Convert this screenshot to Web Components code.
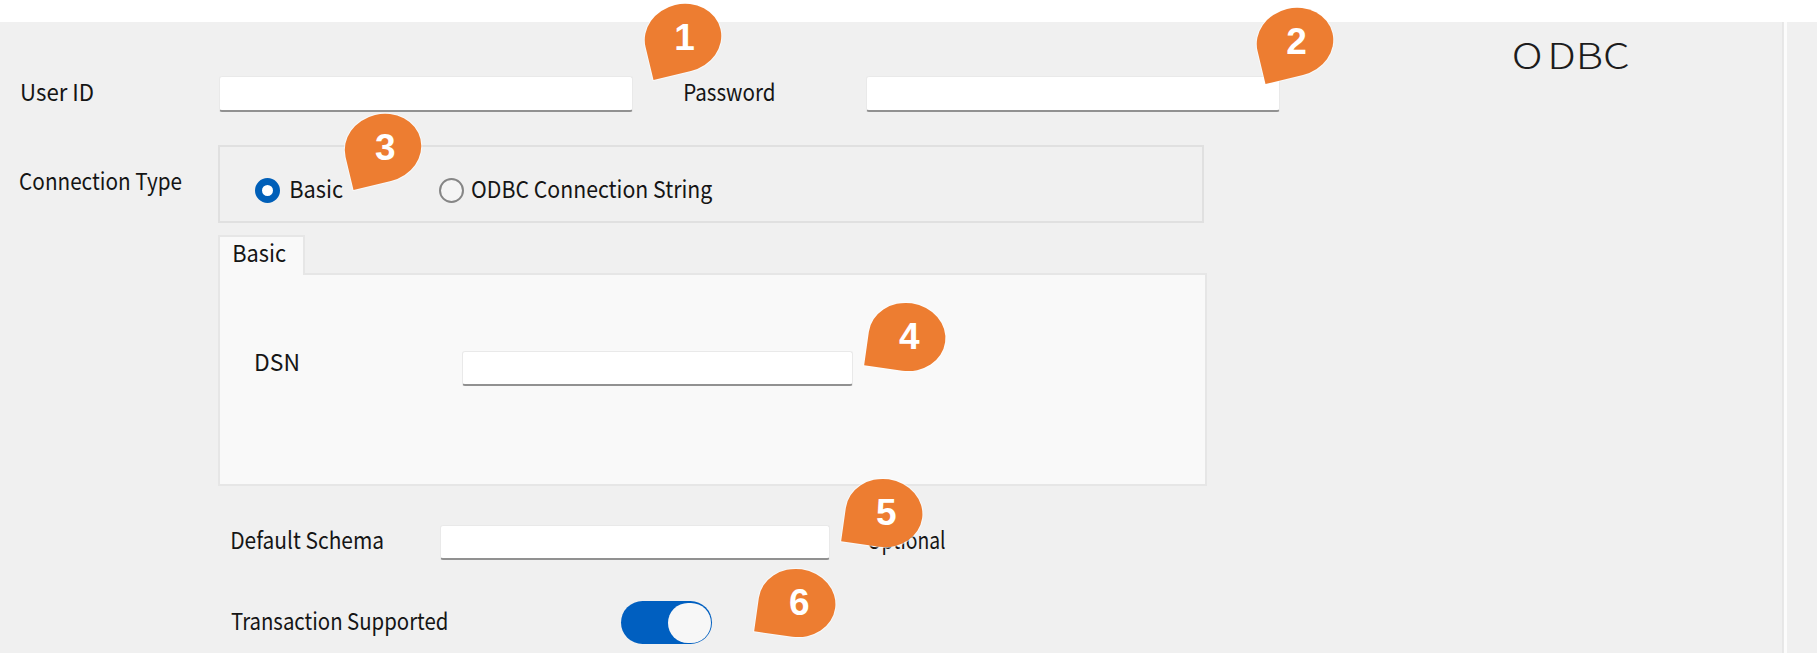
<!DOCTYPE html>
<html lang="en"><head><meta charset="utf-8"><title>ODBC connection</title>
<style>html,body{margin:0;background:#fff;overflow:hidden}</style></head>
<body><odbc-page></odbc-page>
<script>
const define = (name, html, init) => {
  const t = document.createElement('template');
  t.innerHTML = html;
  customElements.define(name, class extends HTMLElement {
    connectedCallback() {
      if (this.shadowRoot) return;
      this.attachShadow({mode: 'open'}).append(t.content.cloneNode(true));
      if (init) init(this, this.shadowRoot);
    }
  });
};

// A label whose ink spans exactly its "w" attribute; "gap" is extra letter-spacing inside it.
define('ui-text', `<style>
  :host{display:block;flex:none;height:30px;line-height:30px;font-size:23.5px;color:#151515;white-space:pre}
  span{display:inline-block;transform-origin:0 0}
</style><span><slot></slot></span>`, (host, root) => {
  const w = +host.getAttribute('w'), gap = +(host.getAttribute('gap') || 0), s = root.querySelector('span');
  const cs = getComputedStyle(host), c = document.createElement('canvas').getContext('2d');
  c.font = cs.fontWeight + ' ' + cs.fontSize + ' ' + cs.fontFamily;
  const m = c.measureText(host.textContent);
  const k = w / (m.actualBoundingBoxRight + m.actualBoundingBoxLeft + gap);
  host.style.width = w + 'px';
  s.style.transform = 'translateX(' + m.actualBoundingBoxLeft * k + 'px) scaleX(' + k + ')';
});

define('ui-field', `<style>
  :host{display:block;flex:none;box-sizing:border-box;height:35px;background:#fff;border:1px solid #e9e9e9;border-bottom:2px solid #919191;border-radius:3px}
</style>`);

define('ui-radio', `<style>
  :host{display:flex;align-items:flex-start}
  i{flex:none;box-sizing:border-box;width:25px;height:25px;border-radius:50%;border:2px solid #868686;background:#f5f5f5}
  :host([checked]) i{border:7.5px solid #005fb8;background:#fff}
  ::slotted(*){margin-top:-5px}
</style><i></i><slot></slot>`);

define('ui-toggle', `<style>
  :host{display:flex;flex:none;justify-content:flex-end;box-sizing:border-box;width:91px;height:43px;border-radius:22px;background:#005fc0;padding:1.5px}
  i{width:43px;height:40px;border-radius:21px;background:#f7f7f7}
</style><i></i>`);

define('ui-group', `<style>
  :host{display:flex;flex:none;box-sizing:border-box;width:986px;height:78px;border:2px solid #e0e0e0}
</style><slot></slot>`);

define('ui-tabs', `<style>
  :host{display:block;width:989px}
  .tab{position:relative;z-index:1;box-sizing:border-box;width:87px;height:40px;margin-bottom:-2px;padding:0 0 0 14px;background:#f9f9f9;border:2px solid #e6e6e6;border-bottom:0}
  .pane{box-sizing:border-box;height:213px;background:#f9f9f9;border:2px solid #e6e6e6;display:flex;padding:77px 0 0 36px}
</style><div class="tab"><slot name="tab"></slot></div><div class="pane"><slot></slot></div>`);

// Numbered teardrop placed over the form; x and y give its centre.
define('ui-pin', `<style>
  :host{position:absolute;width:77px;height:68px;transform:translate(-50%,-50%)}
  i{position:absolute;inset:0;border-radius:50% 50% 50% 0;background:#ed7d31;box-shadow:0 0 0 1px rgba(255,255,255,.6);transform:rotate(var(--r))}
  b{position:relative;display:block;text-align:center;font:bold 37px/68px "Liberation Sans",Arial,sans-serif;color:#fff;left:2px}
</style><i></i><b><slot></slot></b>`, h => {
  h.style.left = h.getAttribute('x') + 'px';
  h.style.top = h.getAttribute('y') + 'px';
  h.style.setProperty('--r', h.getAttribute('r') + 'deg');
});

define('odbc-page', `<style>
  :host{display:block;position:relative;width:1817px;height:653px;overflow:hidden;box-sizing:border-box;padding-top:22px;font-family:"Noto Sans CJK JP",sans-serif}
  .main{display:flex;height:631px;background:#f0f0f0}
  .form{width:1783px;box-sizing:border-box;border-right:1px solid #e6e6e6}
  .rule{width:3px;background:#fcfcfc;border-left:1px solid #e8e8e8}
  .row{display:flex;align-items:flex-start}
  .title{font-size:36px;line-height:50px;height:50px;font-weight:300;color:#1c1c1c}
  .title span{letter-spacing:4px}
</style>
<div class="main"><div class="form">
  <div class="row" style="height:123px">
    <ui-text w="71" style="margin:54px 0 0 22px">User ID</ui-text>
    <ui-field style="width:414px;margin:54px 0 0 126px;height:36px"></ui-field>
    <ui-text w="89" style="margin:54px 0 0 52px">Password</ui-text>
    <ui-field style="width:414px;margin:54px 0 0 92px;height:36px"></ui-field>
    <ui-text class="title" w="115" gap="4" style="margin:6px 0 0 234px"><span>O</span>DBC</ui-text>
  </div>
  <div class="row" style="height:90px">
    <ui-text w="162" style="margin:20px 0 0 20px">Connection Type</ui-text>
    <ui-group style="margin-left:36px">
      <ui-radio checked style="margin:31px 0 0 35px"><ui-text w="52" style="margin-left:11px">Basic</ui-text></ui-radio>
      <ui-radio style="margin:31px 0 0 96px"><ui-text w="240" style="margin-left:8px">ODBC Connection String</ui-text></ui-radio>
    </ui-group>
  </div>
  <ui-tabs style="margin-left:218px">
    <ui-text slot="tab" w="52">Basic</ui-text>
    <ui-text w="42" style="margin-top:-6px">DSN</ui-text>
    <ui-field style="width:391px;margin-left:164px;margin-top:-1px"></ui-field>
  </ui-tabs>
  <div class="row" style="height:77px;padding-top:38px">
    <ui-text w="151" style="margin:0 0 0 232px">Default Schema</ui-text>
    <ui-field style="width:390px;margin:1px 0 0 57px"></ui-field>
    <ui-text w="77" style="margin:0 0 0 38px">Optional</ui-text>
  </div>
  <div class="row">
    <ui-text w="216" style="margin:4px 0 0 231px">Transaction Supported</ui-text>
    <ui-toggle style="margin:0 0 0 174px"></ui-toggle>
  </div>
</div><div class="rule"></div></div>
<ui-pin x="682.5" y="37.8" r="-13.5">1</ui-pin>
<ui-pin x="1294.5" y="42.4" r="-13.5">2</ui-pin>
<ui-pin x="383.3" y="147.8" r="-13.5">3</ui-pin>
<ui-pin x="907.2" y="336.5" r="8">4</ui-pin>
<ui-pin x="884.2" y="512.8" r="8">5</ui-pin>
<ui-pin x="797.2" y="602.8" r="8">6</ui-pin>`);
</script></body></html>
